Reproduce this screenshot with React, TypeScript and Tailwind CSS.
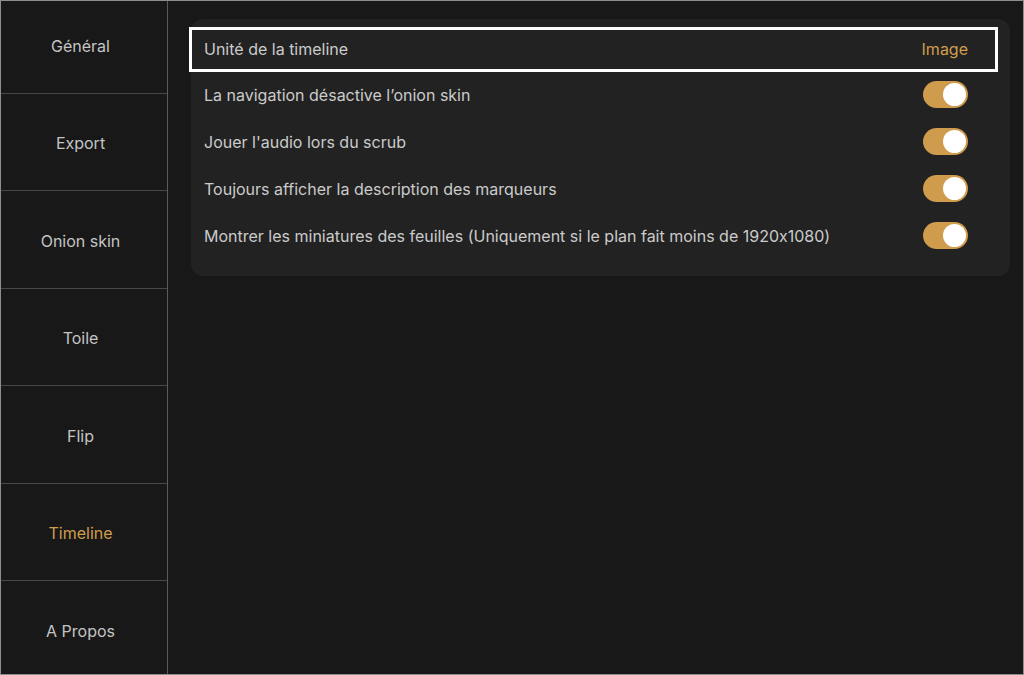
const tabs = ["Général", "Export", "Onion skin", "Toile", "Flip", "Timeline", "A Propos"];
const active = "Timeline";

const toggles = [
  "La navigation désactive l’onion skin",
  "Jouer l'audio lors du scrub",
  "Toujours afficher la description des marqueurs",
  "Montrer les miniatures des feuilles (Uniquement si le plan fait moins de 1920x1080)",
];

function Toggle() {
  return (
    <div className="flex h-[27px] w-[45px] items-center justify-end rounded-full bg-[#cf9b4c] px-[2px]">
      <div className="h-[23px] w-[23px] rounded-full bg-white" />
    </div>
  );
}

export default function App() {
  return (
    <div
      className="flex h-[675px] w-[1024px] overflow-hidden border border-[#8d8d8d] bg-[#181818] text-[16px] [font-feature-settings:'calt'_0]"
      style={{ fontFamily: "Inter, 'Noto Sans', sans-serif" }}
    >
      <div className="w-[167px] shrink-0 overflow-hidden border-r border-[#5a5a5a]">
        <div className="-mt-[5px] flex flex-col">
          {tabs.map((t) => (
            <div
              key={t}
              className={`flex h-[97.5px] shrink-0 items-center justify-center border-b border-[#484848] pr-[7px] pt-[3px] ${
                t === active ? "text-[#d09c4d]" : "text-[#c4c4c4]"
              }`}
            >
              {t}
            </div>
          ))}
        </div>
      </div>

      <div className="flex-1 pl-[23px] pr-[13px] pt-[18px]">
        <div className="flex flex-col rounded-xl bg-[#222222] pb-[17px] pl-[13px] pr-[42px] pt-[5px] text-[#cbcbcb]">
          <div className="relative flex h-[47px] items-center justify-between pt-[3px]">
            <div className="pointer-events-none absolute bottom-[-1px] left-[-15px] right-[-30px] top-[3px] border-[3px] border-white" />
            <span>Unité de la timeline</span>
            <span className="text-[#d09c4d]">Image</span>
          </div>
          {toggles.map((t) => (
            <div key={t} className="flex h-[47px] items-center justify-between">
              <span>{t}</span>
              <Toggle />
            </div>
          ))}
        </div>
      </div>
    </div>
  );
}
